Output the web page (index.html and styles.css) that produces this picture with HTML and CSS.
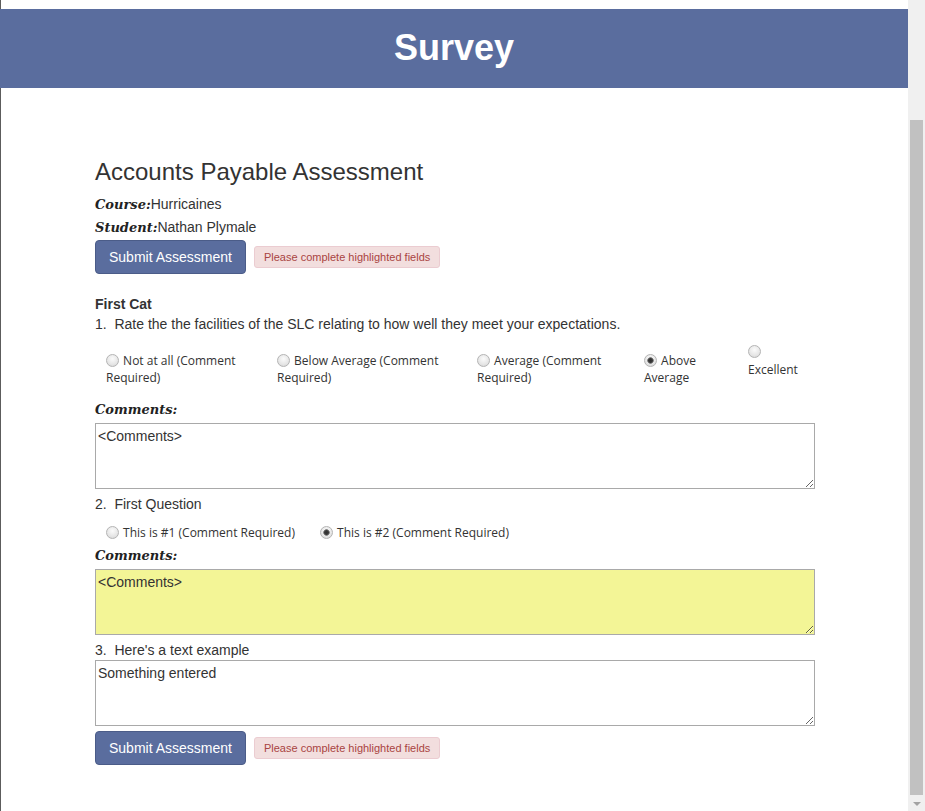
FILE: index.html
```html
<!DOCTYPE html>
<html lang="en">
<head>
<meta charset="utf-8">
<title>Survey</title>
<link rel="stylesheet" href="styles.css">
</head>
<body>
<div class="viewport">
  <div class="page">
    <header class="banner"><h1>Survey</h1></header>
    <main class="container">
      <h3 class="title">Accounts Payable Assessment</h3>
      <div class="meta"><span class="label">Course:</span>Hurricaines</div>
      <div class="meta"><span class="label">Student:</span>Nathan Plymale</div>
      <div class="actions">
        <button class="btn" type="button">Submit Assessment</button>
        <span class="alert">Please complete highlighted fields</span>
      </div>

      <div class="category">First Cat</div>
      <div class="question">1.&nbsp; Rate the the facilities of the SLC relating to how well they meet your expectations.</div>
      <div class="options options-five">
        <label class="opt w1"><input type="radio" name="q1"> Not at all (Comment Required)</label>
        <label class="opt w2"><input type="radio" name="q1"> Below Average (Comment Required)</label>
        <label class="opt w3"><input type="radio" name="q1"> Average (Comment Required)</label>
        <label class="opt w4"><input type="radio" name="q1" checked> Above Average</label>
        <label class="opt w5 stacked"><input type="radio" name="q1"><span>Excellent</span></label>
      </div>
      <div class="comment-label">Comments:</div>
      <textarea class="field">&lt;Comments&gt;</textarea>

      <div class="question">2.&nbsp; First Question</div>
      <div class="options options-two">
        <label class="opt inline"><input type="radio" name="q2"> This is #1 (Comment Required)</label>
        <label class="opt inline"><input type="radio" name="q2" checked> This is #2 (Comment Required)</label>
      </div>
      <div class="comment-label">Comments:</div>
      <textarea class="field highlight">&lt;Comments&gt;</textarea>

      <div class="question">3.&nbsp; Here's a text example</div>
      <textarea class="field tight">Something entered</textarea>
      <div class="actions bottom">
        <button class="btn" type="button">Submit Assessment</button>
        <span class="alert">Please complete highlighted fields</span>
      </div>
    </main>
  </div>
  <div class="scrollbar">
    <div class="thumb"></div>
    <div class="arrow"></div>
  </div>
</div>
</body>
</html>
```
FILE: styles.css
```css
html, body {
  margin: 0;
  padding: 0;
  height: 811px;
  overflow: hidden;
  background: #fff;
}
body {
  font-family: "Liberation Sans", Arial, sans-serif;
  font-size: 14px;
  color: #333;
}
.viewport {
  display: flex;
  height: 811px;
}
.page {
  flex: 1;
  border-left: 1px solid #5c5c5c;
  padding-top: 9px;
  min-width: 0;
}
.banner {
  margin-left: -1px;
  height: 79px;
  background: #5a6d9e;
  display: flex;
  align-items: center;
  justify-content: center;
}
.banner h1 {
  margin: 0;
  color: #fff;
  font-size: 36px;
  font-weight: bold;
  line-height: 1;
  padding-bottom: 2px;
}
.container {
  width: 720px;
  margin: 0 auto;
  padding: 71px 15px 0 16px;
}
.title {
  margin: 0 0 9px;
  font-size: 24px;
  font-weight: normal;
  line-height: 26px;
  color: #333;
}
.meta {
  height: 20px;
  line-height: 20px;
  margin-bottom: 3px;
}
.label {
  font-family: "DejaVu Serif", Georgia, serif;
  font-weight: bold;
  font-style: italic;
  font-size: 13px;
  line-height: 1;
  color: #222;
}
.actions {
  display: flex;
  align-items: center;
  gap: 8px;
}
.btn {
  height: 34px;
  padding: 0 13px;
  background: #5a6d9e;
  border: 1px solid #4b5c88;
  border-radius: 4px;
  color: #fff;
  font-family: "Liberation Sans", Arial, sans-serif;
  font-size: 14px;
}
.alert {
  height: 22px;
  box-sizing: border-box;
  line-height: 20px;
  padding: 0 9px;
  background: #f2dede;
  border: 1px solid #ebccd1;
  border-radius: 3px;
  color: #a94442;
  font-size: 11px;
}
.category {
  margin-top: 20px;
  font-weight: bold;
  line-height: 20px;
}
.question {
  line-height: 20px;
}
.options {
  display: flex;
  align-items: flex-start;
  font-family: "Open Sans", "Segoe UI", sans-serif;
  font-size: 12px;
  line-height: 17px;
  color: #333;
}
.options-five {
  padding: 18px 0 14px;
}
.options-two {
  padding: 10px 0 5px;
}
.opt {
  box-sizing: border-box;
  padding-left: 11px;
}
.w1 { width: 171px; }
.w2 { width: 200px; padding-right: 10px; }
.w3 { width: 167px; padding-right: 20px; }
.w4 { width: 104px; padding-right: 30px; }
.w5 { width: 78px; }
.inline {
  margin-right: 14px;
}
.opt input {
  -webkit-appearance: none;
  appearance: none;
  width: 13px;
  height: 13px;
  margin: 0 1px 0 0;
  border: 1px solid #b4b4b4;
  border-radius: 50%;
  background: radial-gradient(circle at 50% 35%, #fbfbfb 0, #e6e6e6 60%, #d2d2d2 100%);
  vertical-align: -2px;
  box-sizing: border-box;
}
.opt input:checked {
  background: radial-gradient(circle, #2e2e2e 0, #3a3a3a 2px, #8a8a8a 3px, transparent 3.6px),
              radial-gradient(circle at 50% 35%, #fbfbfb 0, #e6e6e6 60%, #d2d2d2 100%);
}
.opt.stacked {
  margin-top: -7px;
}
.opt.stacked input {
  display: block;
  margin-bottom: 3px;
}
.comment-label {
  font-family: "DejaVu Serif", Georgia, serif;
  font-weight: bold;
  font-style: italic;
  font-size: 13px;
  color: #222;
  height: 20px;
  line-height: 20px;
  margin-bottom: 3px;
}
.field {
  display: block;
  box-sizing: border-box;
  width: 720px;
  height: 66px;
  margin: 0 0 5px;
  padding: 4px 2px 2px;
  border: 1px solid #a9a9a9;
  font-family: "Liberation Sans", Arial, sans-serif;
  font-size: 14px;
  color: #333;
  background: #fff;
}
.highlight {
  background: #f3f596;
}
.bottom {
  margin-top: 0;
}
.scrollbar {
  width: 17px;
  flex: none;
  background: #f0f0f0;
  position: relative;
}
.thumb {
  position: absolute;
  left: 2px;
  top: 120px;
  width: 13px;
  height: 675px;
  background: #c1c1c1;
}
.arrow {
  position: absolute;
  left: 5px;
  top: 802px;
  width: 0;
  height: 0;
  border-left: 4px solid transparent;
  border-right: 4px solid transparent;
  border-top: 4px solid #a3a3a3;
}
```
